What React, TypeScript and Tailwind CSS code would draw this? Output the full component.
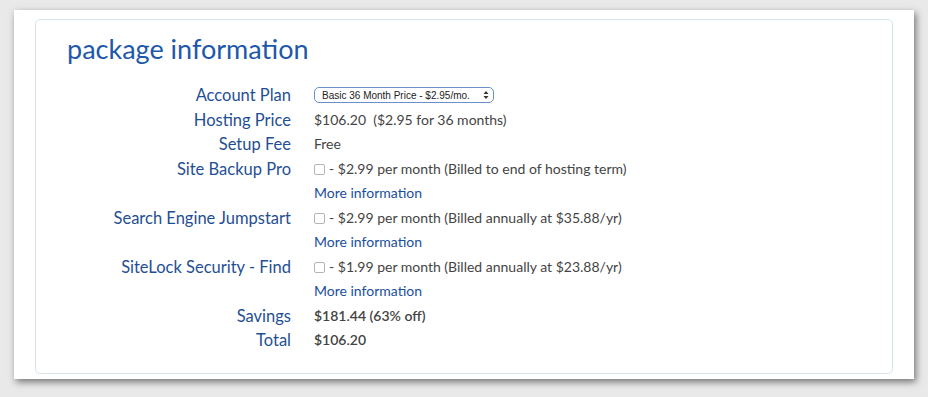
import React from "react";

const Check = () => (
  <span className="inline-block w-[11px] h-[11px] rounded-[2px] border border-[#b5b5b5] bg-white mr-[4px] align-[-1px]" />
);

const Label = ({ children }: { children: React.ReactNode }) => (
  <div className="text-right text-[16.5px] text-[#1f4f93] leading-[24.5px] whitespace-nowrap">{children}</div>
);

const Value = ({ children, cls = "" }: { children: React.ReactNode; cls?: string }) => (
  <div className={"text-[14px] text-[#444] leading-[24.5px] whitespace-nowrap " + cls}>{children}</div>
);

const More = () => (
  <>
    <div />
    <div className="text-[14px] text-[#1a4f9c] leading-[24.5px]">More information</div>
  </>
);

export default function App() {
  return (
    <div className="w-[928px] h-[397px] bg-[#e9e9e9] pt-[10px] pl-[14px] overflow-hidden" style={{ fontFamily: "Lato, 'Open Sans', sans-serif" }}>
      <div className="w-[900px] h-[369px] bg-white shadow-[2px_3px_7px_rgba(0,0,0,0.5)] pt-[9px] pl-[21px]">
        <div className="w-[858px] h-[355px] border border-[#d6e4ea] rounded-[5px]">
          <div className="pl-[31px] pt-[12px] text-[27px] leading-[34px] text-[#1d58aa]">package information</div>
          <div className="grid grid-cols-[255px_1fr] gap-x-[23px] mt-[17px]">
            <Label>Account Plan</Label>
            <div className="flex items-center h-[24.5px]">
              <div className="h-[16px] w-[180px] border border-[#6b8fc7] rounded-[5px] flex items-center justify-between pl-[7px] pr-[4px] text-[10px] text-[#222]" style={{ fontFamily: "'Liberation Sans', Arial, sans-serif" }}>
                <span>Basic 36 Month Price - $2.95/mo.</span>
                <svg width="6" height="10" viewBox="0 0 6 10"><path d="M0.5 4 L3 1 L5.5 4 Z M0.5 6 L3 9 L5.5 6 Z" fill="#333" /></svg>
              </div>
            </div>
            <Label>Hosting Price</Label>
            <Value>$106.20&nbsp;&nbsp;($2.95 for 36 months)</Value>
            <Label>Setup Fee</Label>
            <Value cls="text-[#222]">Free</Value>
            <Label>Site Backup Pro</Label>
            <Value><Check />- $2.99 per month (Billed to end of hosting term)</Value>
            <More />
            <Label>Search Engine Jumpstart</Label>
            <Value><Check />- $2.99 per month (Billed annually at $35.88/yr)</Value>
            <More />
            <Label>SiteLock Security - Find</Label>
            <Value><Check />- $1.99 per month (Billed annually at $23.88/yr)</Value>
            <More />
            <Label>Savings</Label>
            <Value cls="text-[#222] font-semibold">$181.44 (63% off)</Value>
            <Label>Total</Label>
            <Value cls="text-[#222] font-semibold">$106.20</Value>
          </div>
        </div>
      </div>
    </div>
  );
}
